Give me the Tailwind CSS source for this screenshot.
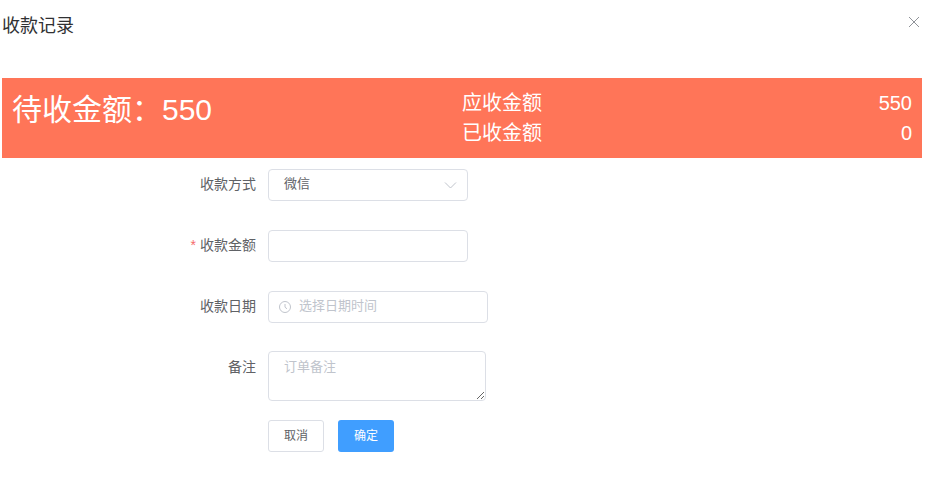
<!DOCTYPE html>
<html lang="zh-CN">
<head>
    <meta charset="UTF-8">
    <meta name="viewport" content="width=device-width, initial-scale=1.0">
    <title>收款记录</title>
    <script src="https://cdn.jsdelivr.net/npm/@tailwindcss/browser@4"></script>
</head>
<body class="bg-white font-['Liberation_Sans','Noto_Sans_CJK_SC',sans-serif] text-[#303133]">
    <div class="relative h-[478px] w-[941px] overflow-hidden pl-[2px]">
        <!-- Header -->
        <div class="flex h-[78px] items-start">
            <h1 class="mt-[14px] text-[18px] leading-[24px] font-normal">收款记录</h1>
        </div>
        <button class="absolute top-[16px] right-[21px] text-[#909399]">
            <svg class="block h-3 w-3" viewBox="0 0 12 12" fill="none" stroke="currentColor" stroke-width="1">
                <path d="M1 1l10 10M11 1L1 11"/>
            </svg>
        </button>

        <!-- Summary -->
        <div class="flex h-20 w-[920px] bg-[#ff7558] px-[10px] text-white">
            <div class="w-[450px] pt-[12px] text-[30px] leading-[40px]">待收金额：550</div>
            <div class="flex-1 pt-[10px] text-[20px] leading-[30px]">
                <div class="flex justify-between"><span>应收金额</span><span>550</span></div>
                <div class="flex justify-between"><span>已收金额</span><span>0</span></div>
            </div>
        </div>

        <!-- Form -->
        <form class="mt-[11px] text-[13px] text-[#606266]">
            <div class="flex h-8 items-center">
                <label class="w-[266px] pr-3 pb-[2px] text-right text-[14px]">收款方式</label>
                <div class="flex h-8 w-[200px] items-center justify-between rounded border border-[#dcdfe6] pr-[10px] pl-[15px]">
                    <span class="pb-[2px]">微信</span>
                    <svg class="h-[14px] w-[14px] text-[#c0c4cc]" viewBox="0 0 14 14" fill="none" stroke="currentColor" stroke-width="1">
                        <path d="M2 4.5L7.5 10l5.5-5.5"/>
                    </svg>
                </div>
            </div>

            <div class="mt-[29px] flex h-8 items-center">
                <label class="w-[266px] pr-3 pb-[2px] text-right text-[14px]"><span class="mr-1 text-[#f56c6c]">*</span>收款金额</label>
                <input type="text" class="h-8 w-[200px] rounded border border-[#dcdfe6] px-[15px] outline-none">
            </div>

            <div class="mt-[29px] flex h-8 items-center">
                <label class="w-[266px] pr-3 pb-[2px] text-right text-[14px]">收款日期</label>
                <div class="flex h-8 w-[220px] items-center rounded border border-[#dcdfe6] pl-[10px]">
                    <svg class="h-3 w-3 shrink-0 text-[#c0c4cc]" viewBox="0 0 12 12" fill="none" stroke="currentColor" stroke-width="1">
                        <circle cx="6" cy="6" r="5.5"/>
                        <path d="M6 3v3.2l2 1.6"/>
                    </svg>
                    <input type="text" placeholder="选择日期时间" class="ml-[8px] min-w-0 flex-1 pb-[2px] outline-none placeholder:text-[#c0c4cc]">
                </div>
            </div>

            <div class="mt-[28px] flex items-start">
                <label class="w-[266px] pt-[6px] pr-3 text-right text-[14px] leading-[20px]">备注</label>
                <textarea placeholder="订单备注" class="block h-[50px] w-[218px] rounded border border-[#dcdfe6] px-[15px] py-[5px] leading-[20px] outline-none placeholder:text-[#c0c4cc]"></textarea>
            </div>

            <div class="mt-[19px] flex gap-[14px] pl-[266px] text-[12px]">
                <button type="button" class="h-8 w-14 rounded-[3px] border border-[#dcdfe6] bg-white text-[#606266]">取消</button>
                <button type="button" class="h-8 w-14 rounded-[3px] bg-[#409eff] text-white">确定</button>
            </div>
        </form>
    </div>
</body>
</html>
